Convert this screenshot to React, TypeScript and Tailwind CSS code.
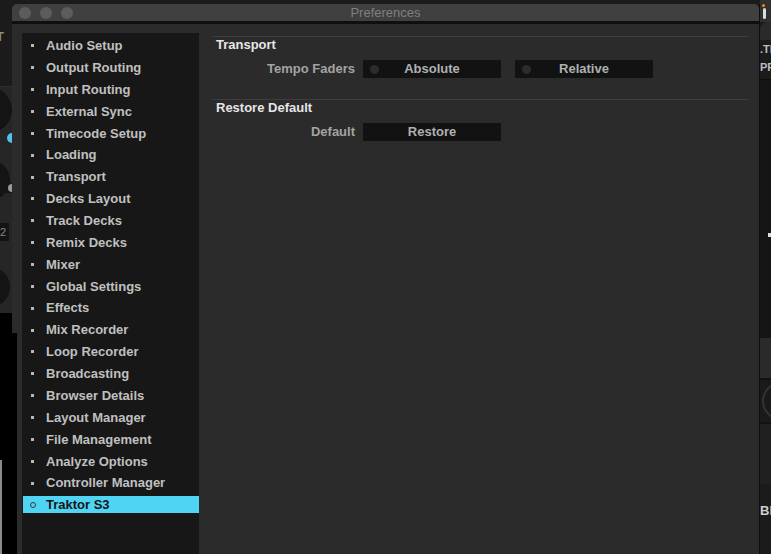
const menu = [
  "Audio Setup",
  "Output Routing",
  "Input Routing",
  "External Sync",
  "Timecode Setup",
  "Loading",
  "Transport",
  "Decks Layout",
  "Track Decks",
  "Remix Decks",
  "Mixer",
  "Global Settings",
  "Effects",
  "Mix Recorder",
  "Loop Recorder",
  "Broadcasting",
  "Browser Details",
  "Layout Manager",
  "File Management",
  "Analyze Options",
  "Controller Manager",
  "Traktor S3",
];

// deck strip peeking out on the left of the prefs window
function LeftDeck() {
  return (
    <div className="flex w-[12px] shrink-0 flex-col bg-[#1b1b1b]">
      <div className="h-[87px] border-b border-[#2e2e2e] pt-[30px] text-[13px] font-bold leading-none text-[#8c8c8c]">
        <span className="-ml-[4px]">T</span>
      </div>
      <div className="relative h-[226px] bg-[#262626]">
        <div className="absolute -left-[34px] top-[0px] h-[46px] w-[46px] rounded-full bg-[#141414]" />
        <div className="absolute left-[7px] top-[46px] h-[10px] w-[5px] rounded-l-full bg-[#4fc3ea]" />
        <div className="absolute -left-[30px] top-[73px] h-[40px] w-[40px] rounded-full bg-[#141414]" />
        <div className="absolute left-0 top-[96px] h-[10px] w-[12px] bg-[#151515]" />
        <div className="absolute left-[8px] top-[97px] h-[8px] w-[4px] rounded-l-full bg-[#9a9a9a]" />
        <div className="absolute left-0 top-[136px] h-[18px] w-[9px] bg-[#141414] text-[11px] leading-[18px] text-[#888]">2</div>
        <div className="absolute -left-[30px] top-[180px] h-[40px] w-[40px] rounded-full bg-[#141414]" />
      </div>
      <div className="flex-1 bg-black" />
    </div>
  );
}

function RightDeck() {
  return (
    <div className="relative flex flex-1 flex-col bg-[#1b1b1b] text-[11px] font-bold leading-none text-[#bdbdbd]">
      <div className="h-[22px] bg-[#303030]">
        <div className="ml-[3px] mt-[8px] h-[11px] w-[3px] rounded-sm bg-[#dcdcdc]" />
      </div>
      <div className="h-[18px] rounded-tl-[8px] bg-[#2a2a2a]" />
      <div className="h-[22px] pt-[4px] whitespace-nowrap">.TR</div>
      <div className="h-[18px] whitespace-nowrap border-b border-[#0c0c0c]">PP</div>
      <div className="relative h-[258px] bg-[#151515]">
        <div className="absolute left-[8px] top-[153px] h-[4px] w-[3px] bg-[#ddd]" />
      </div>
      <div className="h-[42px] border-b-2 border-[#111] bg-[#2a2a2a]" />
      <div className="relative h-[44px] overflow-hidden border-b-2 border-[#111] bg-[#1a1a1a]">
        <div className="absolute left-[2px] top-[2px] h-[38px] w-[38px] rounded-full border-2 border-[#333]" />
      </div>
      <div className="h-[60px] bg-[#202020]" />
      <div className="flex-1 whitespace-nowrap pt-[20px] text-[13px] text-[#cfcfcf]">BP</div>
    </div>
  );
}

function Sidebar() {
  return (
    <div className="w-[177px] shrink-0 bg-[#171717] pt-[2px]">
      {menu.map((item) => {
        const active = item === "Traktor S3";
        return (
          <div key={item} className="flex h-[21.86px] items-center">
            {active ? (
              <div className="ml-[1px] flex h-[17px] w-full items-center bg-[#50d4f3]">
                <span className="ml-[7px] h-[6px] w-[6px] rounded-full border border-[#3a3a3a]" />
                <span className="ml-[10px] text-[13px] font-bold text-[#161616]">{item}</span>
              </div>
            ) : (
              <div className="ml-[1px] flex h-[17px] w-full items-center">
                <span className="ml-[8px] h-[3px] w-[3px] bg-[#b8b8b8]" />
                <span className="ml-[12px] text-[13px] font-bold text-[#c0c0c0]">{item}</span>
              </div>
            )}
          </div>
        );
      })}
    </div>
  );
}

function OptionButton({ label, led }: { label: string; led?: boolean }) {
  return (
    <div className="relative flex h-[18px] w-[138px] items-center justify-center bg-[#121212] text-[13px] font-bold text-[#b0b0b0]">
      {led && <span className="absolute left-[7px] top-[4.5px] h-[9px] w-[9px] rounded-full bg-[#2c2c2c]" />}
      {label}
    </div>
  );
}

function Content() {
  return (
    <div className="flex-1 pl-[13px] pr-[10px] pt-[3px]">
      <div className="h-px bg-[#3d3d3d]" />
      <div className="h-[16px] pl-[4px] text-[13px] font-bold leading-[16px] text-[#e6e6e6]">Transport</div>
      <div className="mt-[7px] flex h-[18px] items-center leading-[18px]">
        <div className="w-[143px] text-right text-[13px] font-bold text-[#a3a3a3]">Tempo Faders</div>
        <div className="ml-[8px] flex gap-[14px]">
          <OptionButton label="Absolute" led />
          <OptionButton label="Relative" led />
        </div>
      </div>
      <div className="mt-[21px] h-px bg-[#3d3d3d]" />
      <div className="h-[16px] pl-[4px] text-[13px] font-bold leading-[16px] text-[#e6e6e6]">Restore Default</div>
      <div className="mt-[7px] flex h-[18px] items-center leading-[18px]">
        <div className="w-[143px] text-right text-[13px] font-bold text-[#a3a3a3]">Default</div>
        <div className="ml-[8px]">
          <OptionButton label="Restore" />
        </div>
      </div>
    </div>
  );
}

export default function App() {
  return (
    <div className="relative flex h-[554px] w-[771px] overflow-hidden bg-[#1b1b1b] font-['Liberation_Sans',Arial,sans-serif]">
      <LeftDeck />
      <div className="mt-[4px] flex h-[550px] w-[748px] shrink-0 flex-col border-r border-[#0e0e0e]">
        <div className="relative flex h-[17px] items-center rounded-t-[5px] bg-[#404040] pl-[7px]">
          <div className="flex gap-[9px]">
            <span className="h-[12px] w-[12px] rounded-full bg-[#5c5c5c]" />
            <span className="h-[12px] w-[12px] rounded-full bg-[#5c5c5c]" />
            <span className="h-[12px] w-[12px] rounded-full bg-[#5c5c5c]" />
          </div>
          <div className="absolute inset-0 flex items-center justify-center text-[13px] text-[#7f7f7f]">Preferences</div>
        </div>
        <div className="h-[3px] bg-[#0f0f0f]" />
        <div className="flex flex-1 bg-[#2b2b2b] pl-[10px] pt-[9px]">
          <Sidebar />
          <Content />
        </div>
      </div>
      <RightDeck />
      <div className="absolute bottom-0 left-0 top-[333px] w-[17px] bg-black">
        <div className="mt-[127px] h-full w-[2px] bg-[#8a8a8a]" />
      </div>
      <div className="absolute left-[762px] top-[4px] h-[3px] w-[3px] rounded-full bg-[#f08a1c]" />
    </div>
  );
}
